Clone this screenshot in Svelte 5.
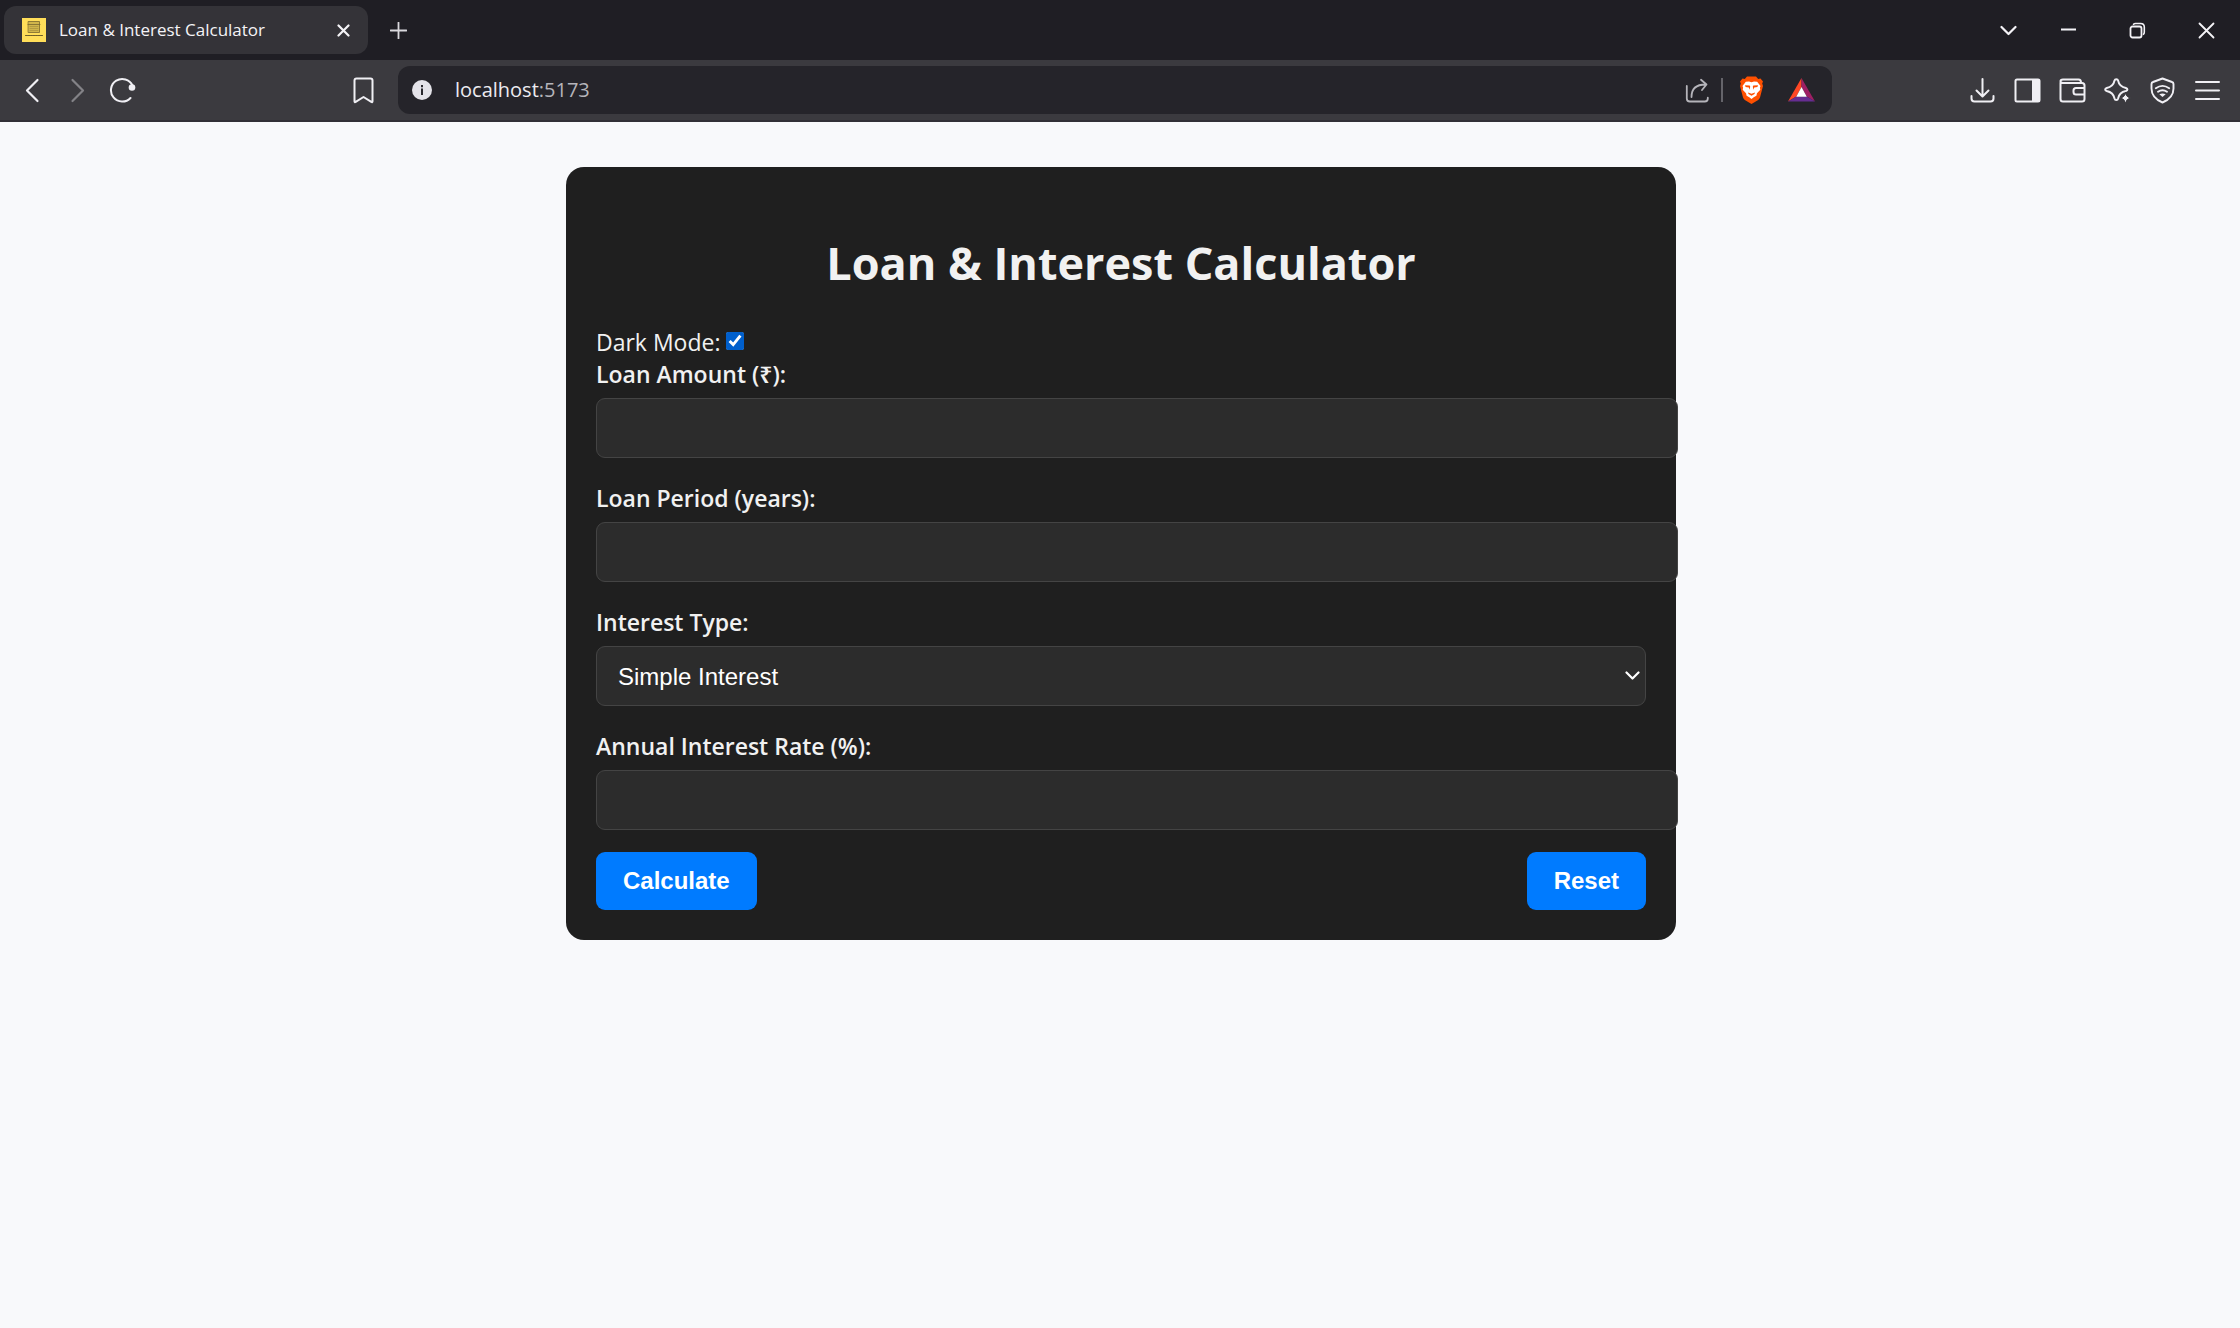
<script>
  let darkMode = $state(true);
  let amount = $state('');
  let period = $state('');
  let interestType = $state('simple');
  let rate = $state('');

  function reset() {
    amount = '';
    period = '';
    interestType = 'simple';
    rate = '';
  }
</script>

<svelte:head><title>Loan &amp; Interest Calculator</title></svelte:head>

<div class="browser">
  <header class="titlebar">
    <div class="tab">
      <svg class="favicon" width="24" height="24" viewBox="0 0 24 24" aria-hidden="true">
        <path fill="#ffde59" d="M0 0h24v24H0z" />
        <path fill="#d0b54b" stroke="#77672e" stroke-width=".8" d="M6.500 3.500h11v11h-11z" />
        <path stroke="#77672e" d="M6 6.500h12" stroke-width=".8" />
        <path stroke="#a08a3a" d="M8 8.500h8M8 10.500h8M8 12.500h8" stroke-width=".6" />
        <path stroke="#6d5e29" d="M3.500 17.500h17" stroke-dasharray="2 .5" />
      </svg>
      <span class="tab-title">Loan &amp; Interest Calculator</span>
      <button class="tab-close" aria-label="Close tab">
        <svg width="13" height="13" viewBox="0 0 13 13"><path d="m1.500 1.500 10 10m0-10-10 10" stroke-width="2.200" /></svg>
      </button>
    </div>
    <button class="new-tab" aria-label="New tab">
      <svg width="17" height="17" viewBox="0 0 17 17"><path d="M8.500.5v16M.5 8.500h16" stroke-width="1.800" /></svg>
    </button>
    <div class="window-controls">
      <button class="search-tabs" aria-label="Search tabs">
        <svg width="17" height="11" viewBox="0 0 17 11"><path d="m1.500 2 7 7 7-7" stroke-width="2.200" /></svg>
      </button>
      <button aria-label="Minimize">
        <svg width="15" height="15" viewBox="0 0 15 15"><path d="M.5 6.500h14" stroke-width="2" /></svg>
      </button>
      <button class="restore" aria-label="Restore">
        <svg width="17" height="17" viewBox="0 0 17 17"><rect x="1.500" y="4.500" width="11" height="11" rx="2" stroke-width="1.800" /><path d="M4.500 2.200Q5.200 1.500 6.500 1.500H11.500Q15.300 1.500 15.300 5V10Q15.300 11.500 14.500 12.300" stroke-width="1.600" /></svg>
      </button>
      <button aria-label="Close">
        <svg width="17" height="17" viewBox="0 0 17 17"><path d="m1.500 1.500 14 14m0-14-14 14" stroke-width="1.800" /></svg>
      </button>
    </div>
  </header>

  <nav class="toolbar" aria-label="Browser toolbar">
    <div class="nav-buttons">
      <button aria-label="Back">
        <svg width="15" height="25" viewBox="0 0 15 25"><path d="M12.500 2 2 12.500 12.500 23" stroke-width="2.200" /></svg>
      </button>
      <button class="dim" aria-label="Forward">
        <svg width="15" height="25" viewBox="0 0 15 25"><path d="m2.500 2 10.500 10.500L2.500 23" stroke-width="2.200" /></svg>
      </button>
      <button aria-label="Reload">
        <svg width="27" height="27" viewBox="0 0 27 27"><path d="M23.500 8.500A11.300 11.300 0 1 0 21.500 21" stroke-width="2" /><circle cx="23" cy="10.500" r="3.300" fill="currentColor" stroke="none" /></svg>
      </button>
      <button class="bookmark" aria-label="Bookmark this page">
        <svg width="21" height="27" viewBox="0 0 21 27"><path d="M3.500 1.500h14q2 0 2 2V24.200q0 1.500-1.200.7L10.500 20l-7.800 4.900q-1.200.8-1.200-.7V3.500q0-2 2-2Z" stroke-width="2" /></svg>
      </button>
    </div>

    <div class="address-bar">
      <svg width="20" height="20" viewBox="0 0 20 20" aria-hidden="true"><circle cx="10" cy="10" r="10" fill="#e4e3e9" stroke="none" /><path fill="#29282e" stroke="none" d="M9 5h2v2.200H9zM9 8.500h2V15H9z" /></svg>
      <div class="url">localhost<span>:5173</span></div>
      <button class="share" aria-label="Share">
        <svg width="25" height="25" viewBox="0 0 25 25"><path d="M1.800 8v12.500q0 3 3 3h15q3 0 3-3v-.8M6.500 19C6.500 11 11 6.500 20.500 6.500M16 1.800l5.500 4.700L17 12" stroke-width="1.800" /></svg>
      </button>
      <span class="divider"></span>
      <button class="shields" aria-label="Brave Shields">
        <svg width="25" height="28" viewBox="0 0 25 28">
          <path fill="#ff5000" stroke="none" d="M8 .5h9L19.200 3l2.300-.4 2.500 3-.8 2 .8 2.400-3 11.500q-.5 1.500-1.800 2.400L12.500 28l-6.700-4.100Q4.500 23 4 21.500L1 10l.8-2.400-.8-2 2.500-3 2.300.4Z" />
          <path fill="#fff" stroke="none" d="m12.500 6.300 2.500-.8 3.200.2 3.300 4.200-.6 1.600.4 2.300-3.300 3.500-.6 2.500-2.700 1.500-2.200 1.600-2.200-1.600-2.700-1.500-.6-2.500-3.300-3.500.4-2.300-.6-1.600 3.300-4.200 3.200-.2Z" />
          <path fill="#ff5000" stroke="none" d="m6 9.200 4.700.3.500 1-.5 3.300-.9-2.300L6.600 11Zm13 0-4.700.3-.5 1 .5 3.300.9-2.300 3.200-.5ZM9 16.500l3.500 1.200 3.500-1.200-.5 1.500-3 1.800-3-1.800Z" />
        </svg>
      </button>
      <button class="rewards" aria-label="Brave Rewards">
        <svg width="27" height="24" viewBox="0 0 27 24">
          <path fill="#ff4724" stroke="none" d="M13.500 0v9L8.300 18.500 0 23.500Z" />
          <path fill="#9e1f63" stroke="none" d="M13.500 0 27 23.500l-8.300-5L13.500 9Z" />
          <path fill="#662d91" stroke="none" d="M0 23.500h27l-8.300-5H8.300Z" />
          <path fill="#fff" stroke="none" d="m13.500 9 5.300 9.700H8.200Z" />
        </svg>
      </button>
    </div>

    <div class="tools">
      <button aria-label="Downloads">
        <svg width="25" height="25" viewBox="0 0 25 25"><path d="M12.500 1v17M6.500 12.500l6 6 6-6M1.500 18v2.500q0 3 3 3h16q3 0 3-3V18" stroke-width="2" /></svg>
      </button>
      <button aria-label="Sidebar">
        <svg width="27" height="25" viewBox="0 0 27 25"><rect x="1.500" y="1.500" width="24" height="22" rx="1.500" stroke-width="2" /><path fill="currentColor" stroke="none" d="M18 1h7.500v23H18z" /></svg>
      </button>
      <button aria-label="Wallet">
        <svg width="27" height="25" viewBox="0 0 27 25"><path d="M1.500 4.500V21q0 2.500 2.500 2.500h19q2.500 0 2.500-2.500V7.500Q25.500 5 23 5H4Q1.500 5 1.500 3.300T4 1.500H19.500Q22 1.500 22 4.500M25.500 10H17q-2.500 0-2.500 2.500v1.500q0 2.500 2.500 2.500h8.500" stroke-width="2" /></svg>
      </button>
      <button aria-label="Leo AI">
        <svg width="27" height="27" viewBox="0 0 27 27"><path d="M12.300 2.200q1.400 0 1.800 1.400 1.200 6 7.800 7.400 1.500.4 1.500 1.500t-1.500 1.500q-6.600 1.300-7.800 7.400-.4 1.500-1.800 1.500t-1.800-1.500Q9.300 15.400 2.700 14 1.200 13.600 1.200 12.500T2.700 11Q9.300 9.600 10.500 3.600q.4-1.400 1.800-1.400Z" stroke-width="2" /><path fill="currentColor" stroke="#3b3a3f" stroke-width="1" d="M21.500 15.700q.7 4.600 5.300 5.300-4.600.7-5.300 5.300-.7-4.600-5.300-5.300 4.600-.7 5.300-5.300Z" /></svg>
      </button>
      <button aria-label="VPN">
        <svg width="25" height="27" viewBox="0 0 25 27"><path d="M12.500 1.500 22 5q1.500.5 1.500 2v4.500c0 6.500-5 11.500-11 14-6-2.500-11-7.500-11-14V7q0-1.500 1.500-2ZM5.800 11.200q6.700-4.700 13.400 0M8 14.800q4.500-3.200 9 0" stroke-width="1.900" /><path fill="currentColor" stroke="none" d="M9.300 17.300q3.200-1.800 6.400 0L12.500 20Z" /></svg>
      </button>
      <button aria-label="Menu">
        <svg width="27" height="21" viewBox="0 0 27 21"><path d="M2 2h23M2 10.500h23M2 19h23" stroke-width="2" /></svg>
      </button>
    </div>
  </nav>

  <main>
    <form class="card" class:light={!darkMode} onsubmit={(event) => event.preventDefault()}>
      <h1>Loan &amp; Interest Calculator</h1>
      <div class="mode">
        <label for="dark-mode">Dark Mode:</label>
        <input id="dark-mode" type="checkbox" bind:checked={darkMode} />
      </div>
      <div class="fields">
        <div class="field">
          <label for="amount">Loan Amount (₹):</label>
          <input id="amount" type="text" inputmode="decimal" bind:value={amount} />
        </div>
        <div class="field">
          <label for="period">Loan Period (years):</label>
          <input id="period" type="text" inputmode="decimal" bind:value={period} />
        </div>
        <div class="field">
          <label for="interest-type">Interest Type:</label>
          <div class="select-box">
            <select id="interest-type" bind:value={interestType}>
              <option value="simple">Simple Interest</option>
              <option value="compound">Compound Interest</option>
            </select>
            <svg width="15" height="10" viewBox="0 0 15 10" aria-hidden="true"><path d="m1.500 1.500 6 6 6-6" stroke-width="2.200" /></svg>
          </div>
        </div>
        <div class="field">
          <label for="rate">Annual Interest Rate (%):</label>
          <input id="rate" type="text" inputmode="decimal" bind:value={rate} />
        </div>
      </div>
      <div class="actions">
        <button type="submit">Calculate</button>
        <button type="button" onclick={reset}>Reset</button>
      </div>
    </form>
  </main>
</div>

<style>
  :global(body) {
    margin: 0;
    background: #f8f9fb;
  }

  .browser {
    min-height: 100vh;
    background: #f8f9fb;
    font-family: 'Open Sans', 'Noto Sans', sans-serif;
  }

  button {
    display: flex;
    align-items: center;
    justify-content: center;
    padding: 0;
    border: 0;
    background: none;
    color: inherit;
  }

  svg {
    display: block;
    flex: none;
    fill: none;
    stroke: currentColor;
    stroke-linecap: round;
    stroke-linejoin: round;
  }

  .favicon {
    stroke: none;
  }

  .titlebar {
    display: flex;
    height: 60px;
    background: #1f1e24;
    color: #f4f3f7;
  }

  .tab {
    display: flex;
    align-items: center;
    box-sizing: border-box;
    width: 364px;
    height: 48px;
    margin: 6px 0 0 4px;
    padding: 0 11px 0 18px;
    border-radius: 12px;
    background: #343338;
  }

  .tab-title {
    flex: 1;
    margin-left: 13px;
    font-size: 17px;
    line-height: 24px;
    white-space: nowrap;
  }

  .tab-close {
    width: 27px;
    height: 27px;
  }

  .new-tab {
    width: 61px;
    color: #d9d8dd;
  }

  .window-controls {
    display: flex;
    margin-left: auto;
  }

  .window-controls button {
    width: 67px;
  }

  .window-controls .restore {
    width: 71px;
  }

  .window-controls .search-tabs {
    width: 53px;
  }

  .toolbar {
    display: grid;
    grid-template-columns: 398px 1fr 408px;
    align-items: center;
    box-sizing: border-box;
    height: 62px;
    border-bottom: 2px solid #313036;
    background: #3b3a3f;
    color: #f0eff4;
  }

  .nav-buttons,
  .tools {
    display: flex;
    padding-left: 10px;
  }

  .tools {
    justify-content: flex-end;
    padding: 0 10px 0 0;
  }

  .nav-buttons button,
  .tools button {
    width: 45px;
    height: 45px;
  }

  .nav-buttons .dim {
    color: #838287;
  }

  .nav-buttons .bookmark {
    margin: 0 12px 0 auto;
  }

  .address-bar {
    display: flex;
    align-items: center;
    box-sizing: border-box;
    height: 48px;
    padding: 0 17px 0 14px;
    border-radius: 12px;
    background: #25242a;
  }

  .url {
    flex: 1;
    margin-left: 23px;
    font-size: 20px;
    line-height: 28px;
    color: #ecebf0;
  }

  .url span {
    color: #b5b4ba;
  }

  .share {
    color: #b5b4ba;
  }

  .divider {
    width: 2px;
    height: 24px;
    margin: 0 16px 0 11px;
    background: #65646a;
  }

  .rewards {
    margin-left: 24px;
  }

  main {
    padding: 45px 24px 45px 26px;
  }

  .card {
    box-sizing: border-box;
    max-width: 1110px;
    margin: 0 auto;
    padding: 30px;
    border-radius: 18px;
    background: #1f1f1f;
    color: #f1f1f1;
    font-size: 24px;
    line-height: 32px;
  }

  .card.light {
    background: #fff;
    color: #222;
  }

  h1 {
    margin: 34px 0 31px;
    font-size: 45px;
    font-weight: 700;
    line-height: 64px;
    text-align: center;
  }

  .mode {
    display: flex;
    align-items: center;
    gap: 6px;
    height: 32px;
    font-size: 23px;
  }

  .mode input {
    width: 18px;
    height: 18px;
    margin: 0 0 2px;
    accent-color: #005fcc;
  }

  .fields {
    display: grid;
    gap: 24px;
  }

  .field label {
    display: block;
    margin-bottom: 8px;
    font-size: 23px;
    font-weight: 600;
  }

  .field input,
  select {
    display: block;
    box-sizing: border-box;
    width: 100%;
    height: 60px;
    padding: 0 21px;
    border: 1px solid #444;
    border-radius: 9px;
    background: #2c2c2c;
    color: #fff;
    font-family: 'Liberation Sans', Arial, sans-serif;
    font-size: 24px;
  }

  /* The text boxes run past the card's padding and edge. */
  .field input {
    width: calc(100% + 32px);
  }

  select {
    appearance: none;
  }

  .select-box {
    position: relative;
    color: #fff;
  }

  .select-box svg {
    position: absolute;
    top: 25px;
    right: 6px;
    pointer-events: none;
  }

  .actions {
    display: flex;
    justify-content: space-between;
    margin-top: 22px;
  }

  .actions button {
    height: 58px;
    padding: 0 27px;
    border-radius: 9px;
    background: #007bff;
    color: #fff;
    font-family: 'Liberation Sans', Arial, sans-serif;
    font-size: 24px;
    font-weight: 700;
  }
</style>
